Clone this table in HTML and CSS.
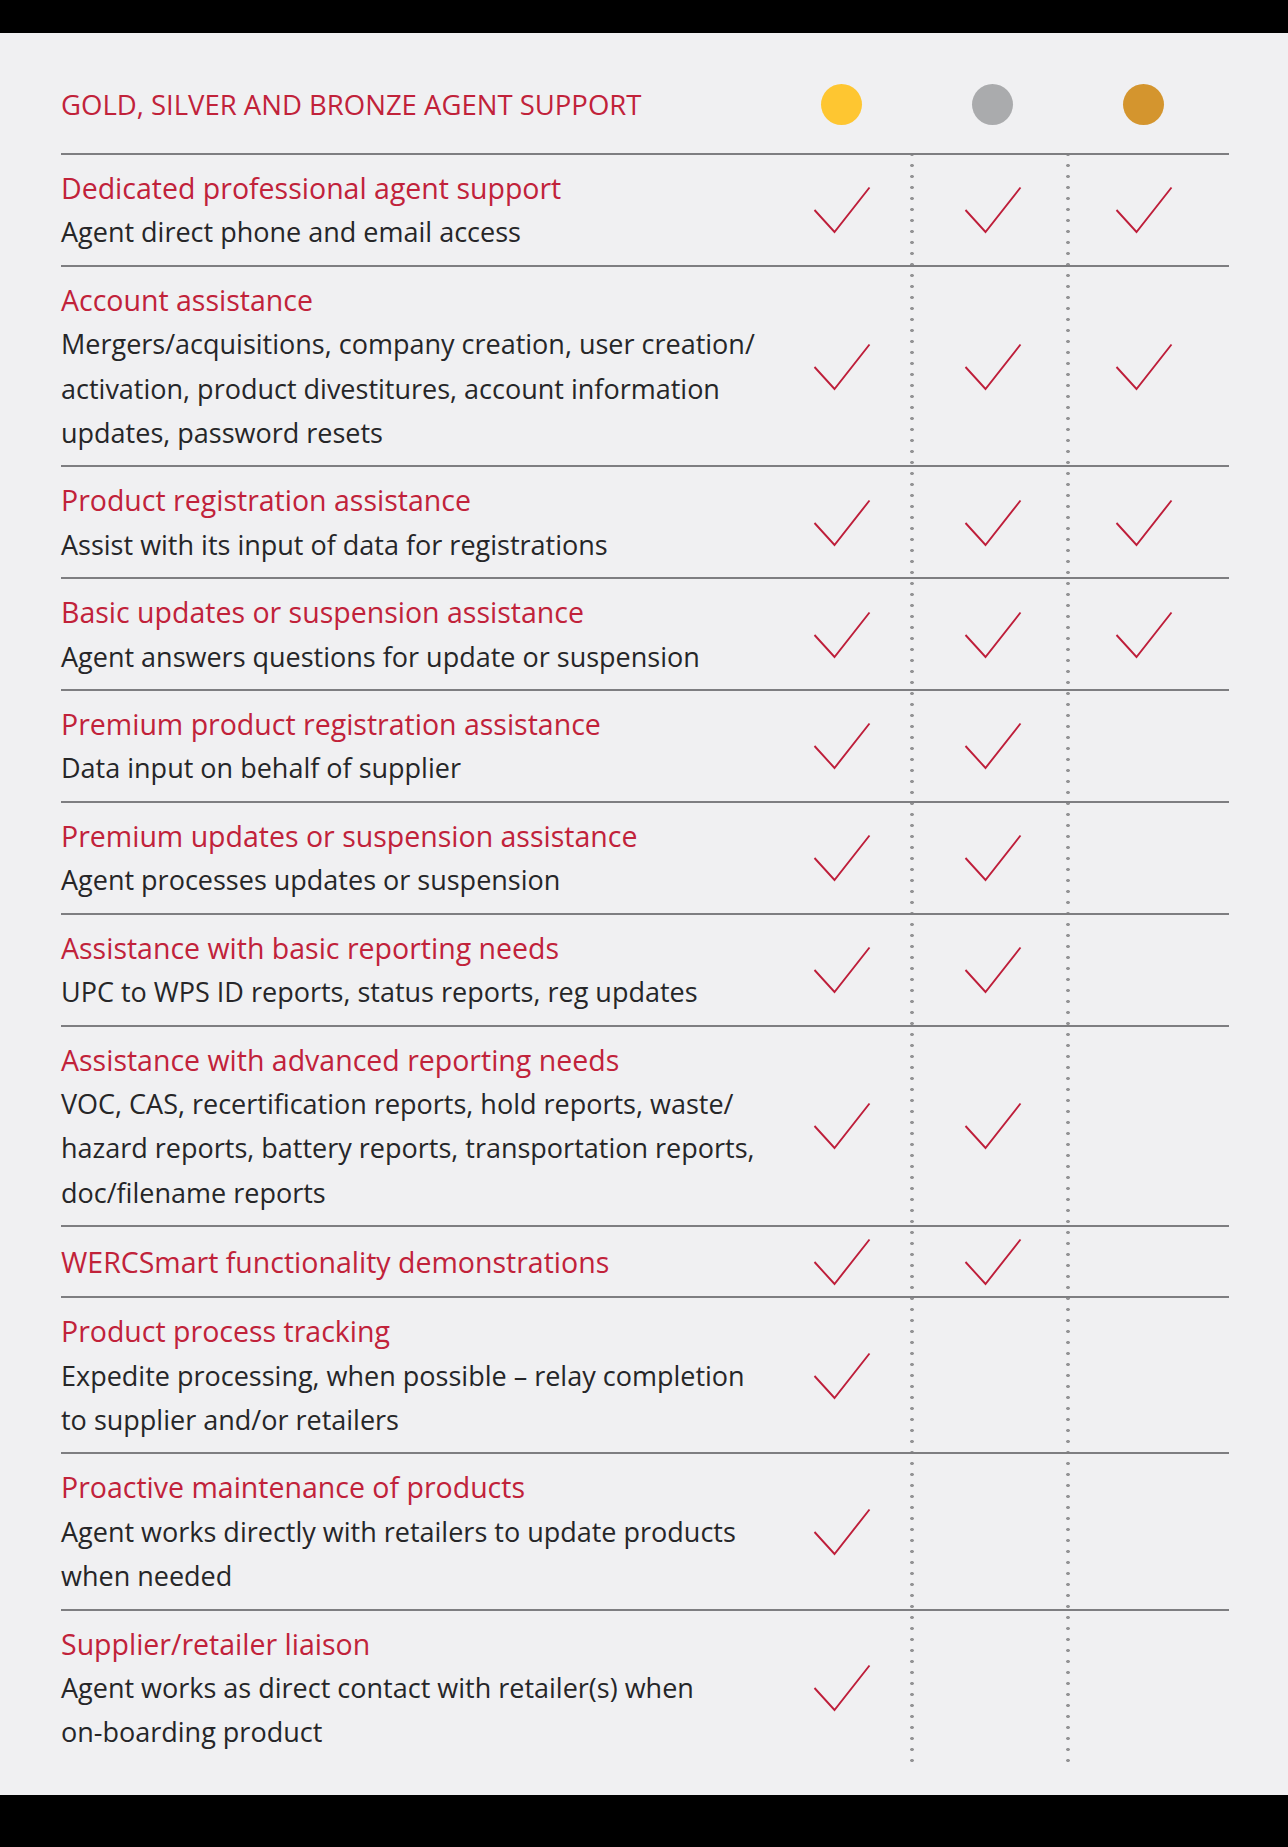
FILE: index.html
```html
<!DOCTYPE html>
<html lang="en">
<head>
<meta charset="utf-8">
<title>Gold, Silver and Bronze Agent Support</title>
<link rel="stylesheet" href="styles.css">
</head>
<body>
<div class="topbar"></div>
<main class="sheet">
  <div class="head">
    <h1 class="head-title">GOLD, SILVER AND BRONZE AGENT SUPPORT</h1>
    <div class="cell"><span class="dot gold"></span></div>
    <div class="cell"><span class="dot silver"></span></div>
    <div class="cell"><span class="dot bronze"></span></div>
  </div>
  <div class="table">
    <div class="row">
      <div class="txt"><div class="title">Dedicated professional agent support</div><div class="desc">Agent direct phone and email access</div></div>
      <div class="cell"><svg class="check" viewBox="0 0 58 48"><polyline points="1.5,24 21.5,46 56.5,1.5"/></svg></div>
      <div class="cell"><svg class="check" viewBox="0 0 58 48"><polyline points="1.5,24 21.5,46 56.5,1.5"/></svg></div>
      <div class="cell"><svg class="check" viewBox="0 0 58 48"><polyline points="1.5,24 21.5,46 56.5,1.5"/></svg></div>
    </div>
    <div class="row">
      <div class="txt"><div class="title">Account assistance</div><div class="desc">Mergers/acquisitions, company creation, user creation/<br>activation, product divestitures, account information<br>updates, password resets</div></div>
      <div class="cell"><svg class="check" viewBox="0 0 58 48"><polyline points="1.5,24 21.5,46 56.5,1.5"/></svg></div>
      <div class="cell"><svg class="check" viewBox="0 0 58 48"><polyline points="1.5,24 21.5,46 56.5,1.5"/></svg></div>
      <div class="cell"><svg class="check" viewBox="0 0 58 48"><polyline points="1.5,24 21.5,46 56.5,1.5"/></svg></div>
    </div>
    <div class="row">
      <div class="txt"><div class="title">Product registration assistance</div><div class="desc">Assist with its input of data for registrations</div></div>
      <div class="cell"><svg class="check" viewBox="0 0 58 48"><polyline points="1.5,24 21.5,46 56.5,1.5"/></svg></div>
      <div class="cell"><svg class="check" viewBox="0 0 58 48"><polyline points="1.5,24 21.5,46 56.5,1.5"/></svg></div>
      <div class="cell"><svg class="check" viewBox="0 0 58 48"><polyline points="1.5,24 21.5,46 56.5,1.5"/></svg></div>
    </div>
    <div class="row">
      <div class="txt"><div class="title">Basic updates or suspension assistance</div><div class="desc">Agent answers questions for update or suspension</div></div>
      <div class="cell"><svg class="check" viewBox="0 0 58 48"><polyline points="1.5,24 21.5,46 56.5,1.5"/></svg></div>
      <div class="cell"><svg class="check" viewBox="0 0 58 48"><polyline points="1.5,24 21.5,46 56.5,1.5"/></svg></div>
      <div class="cell"><svg class="check" viewBox="0 0 58 48"><polyline points="1.5,24 21.5,46 56.5,1.5"/></svg></div>
    </div>
    <div class="row">
      <div class="txt"><div class="title">Premium product registration assistance</div><div class="desc">Data input on behalf of supplier</div></div>
      <div class="cell"><svg class="check" viewBox="0 0 58 48"><polyline points="1.5,24 21.5,46 56.5,1.5"/></svg></div>
      <div class="cell"><svg class="check" viewBox="0 0 58 48"><polyline points="1.5,24 21.5,46 56.5,1.5"/></svg></div>
      <div class="cell"></div>
    </div>
    <div class="row">
      <div class="txt"><div class="title">Premium updates or suspension assistance</div><div class="desc">Agent processes updates or suspension</div></div>
      <div class="cell"><svg class="check" viewBox="0 0 58 48"><polyline points="1.5,24 21.5,46 56.5,1.5"/></svg></div>
      <div class="cell"><svg class="check" viewBox="0 0 58 48"><polyline points="1.5,24 21.5,46 56.5,1.5"/></svg></div>
      <div class="cell"></div>
    </div>
    <div class="row">
      <div class="txt"><div class="title">Assistance with basic reporting needs</div><div class="desc">UPC to WPS ID reports, status reports, reg updates</div></div>
      <div class="cell"><svg class="check" viewBox="0 0 58 48"><polyline points="1.5,24 21.5,46 56.5,1.5"/></svg></div>
      <div class="cell"><svg class="check" viewBox="0 0 58 48"><polyline points="1.5,24 21.5,46 56.5,1.5"/></svg></div>
      <div class="cell"></div>
    </div>
    <div class="row">
      <div class="txt"><div class="title">Assistance with advanced reporting needs</div><div class="desc">VOC, CAS, recertification reports, hold reports, waste/<br>hazard reports, battery reports, transportation reports,<br>doc/filename reports</div></div>
      <div class="cell"><svg class="check" viewBox="0 0 58 48"><polyline points="1.5,24 21.5,46 56.5,1.5"/></svg></div>
      <div class="cell"><svg class="check" viewBox="0 0 58 48"><polyline points="1.5,24 21.5,46 56.5,1.5"/></svg></div>
      <div class="cell"></div>
    </div>
    <div class="row">
      <div class="txt"><div class="title">WERCSmart functionality demonstrations</div></div>
      <div class="cell"><svg class="check" viewBox="0 0 58 48"><polyline points="1.5,24 21.5,46 56.5,1.5"/></svg></div>
      <div class="cell"><svg class="check" viewBox="0 0 58 48"><polyline points="1.5,24 21.5,46 56.5,1.5"/></svg></div>
      <div class="cell"></div>
    </div>
    <div class="row">
      <div class="txt"><div class="title">Product process tracking</div><div class="desc">Expedite processing, when possible – relay completion<br>to supplier and/or retailers</div></div>
      <div class="cell"><svg class="check" viewBox="0 0 58 48"><polyline points="1.5,24 21.5,46 56.5,1.5"/></svg></div>
      <div class="cell"></div>
      <div class="cell"></div>
    </div>
    <div class="row">
      <div class="txt"><div class="title">Proactive maintenance of products</div><div class="desc">Agent works directly with retailers to update products<br>when needed</div></div>
      <div class="cell"><svg class="check" viewBox="0 0 58 48"><polyline points="1.5,24 21.5,46 56.5,1.5"/></svg></div>
      <div class="cell"></div>
      <div class="cell"></div>
    </div>
    <div class="row">
      <div class="txt"><div class="title">Supplier/retailer liaison</div><div class="desc">Agent works as direct contact with retailer(s) when<br>on-boarding product</div></div>
      <div class="cell"><svg class="check" viewBox="0 0 58 48"><polyline points="1.5,24 21.5,46 56.5,1.5"/></svg></div>
      <div class="cell"></div>
      <div class="cell"></div>
    </div>
  </div>
</main>
<div class="bottombar"></div>
</body>
</html>
```
FILE: styles.css
```css
* { box-sizing: border-box; }
html, body { margin: 0; padding: 0; }
body {
  background: #f0f0f2;
  font-family: "Open Sans", "Liberation Sans", sans-serif;
  color: #262628;
  width: 1288px;
}
.topbar { height: 33px; background: #000; }
.bottombar { height: 55px; background: #000; }
.sheet { padding: 0 59px 30px 61px; }

.head {
  height: 120px;
  display: grid;
  grid-template-columns: 1fr 151px 151px 151px;
  padding-right: 10px;
  align-items: center;
  padding-top: 22px;
}
.head-title {
  margin: 0;
  font-weight: 400;
  font-size: 27.5px;
  color: #c1223a;
  white-space: nowrap;
}
.cell { display: flex; justify-content: center; align-items: center; }
.dot { width: 41px; height: 41px; border-radius: 50%; display: block; }
.gold { background: #fec631; }
.silver { background: #aaabad; }
.bronze { background: #d4952e; }

.table {
  background-image:
    radial-gradient(circle, #949496 1.5px, transparent 2px),
    radial-gradient(circle, #949496 1.5px, transparent 2px);
  background-size: 4px 11px, 4px 11px;
  background-repeat: repeat-y, repeat-y;
  background-position: 849px -4px, 1005px -4px;
}
.row {
  display: grid;
  grid-template-columns: 1fr 151px 151px 151px;
  padding: 11px 10px 10px 0;
  border-top: 2px solid #7e7e81;
  align-items: center;
}
.txt { line-height: 44.4px; white-space: nowrap; }
.title { color: #c1223a; font-size: 28.5px; }
.desc { color: #262628; font-size: 27px; }
.check {
  width: 58px; height: 48px; display: block;
  fill: none; stroke: #be1e3a; stroke-width: 1.9; stroke-linejoin: miter;
}
```
